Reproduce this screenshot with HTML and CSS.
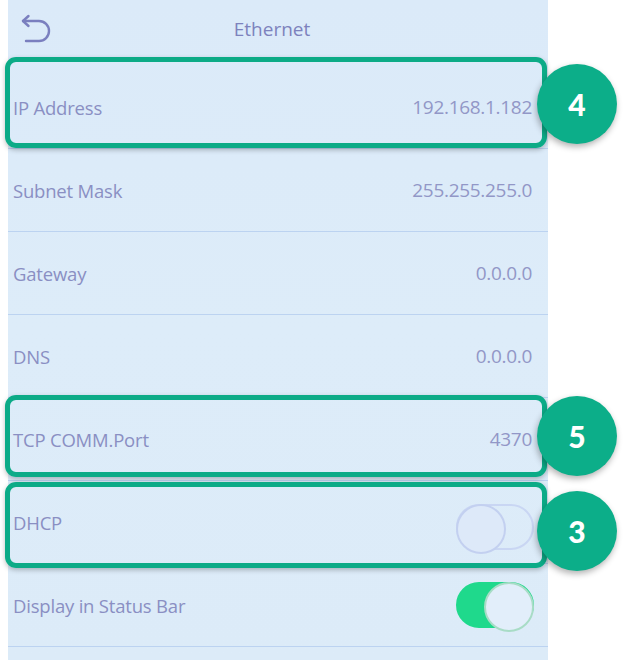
FILE: index.html
```html
<!DOCTYPE html>
<html lang="en">
<head>
    <meta charset="UTF-8">
    <meta name="viewport" content="width=device-width, initial-scale=1.0">
    <title>Ethernet</title>

    <!-- Style CSS -->
    <link rel="stylesheet" href="styles.css">
</head>
<body>
    <div class="screen">
        <div class="header">
            <svg class="back" width="32" height="32" viewBox="0 0 32 32">
                <path d="M4 7 H20 A10 10 0 0 1 20 27 H7" fill="none" stroke="#7a7fbf" stroke-width="2.4" stroke-linecap="round"/>
                <path d="M9.5 2 L4 7 L9.5 12" fill="none" stroke="#7a7fbf" stroke-width="2.4" stroke-linecap="round" stroke-linejoin="round"/>
            </svg>
            <span class="title">Ethernet</span>
        </div>

        <div class="row marked mark-ip">
            <span class="label">IP Address</span>
            <span class="value">192.168.1.182</span>
            <span class="badge">4</span>
        </div>
        <div class="row">
            <span class="label">Subnet Mask</span>
            <span class="value">255.255.255.0</span>
        </div>
        <div class="row">
            <span class="label">Gateway</span>
            <span class="value">0.0.0.0</span>
        </div>
        <div class="row">
            <span class="label">DNS</span>
            <span class="value">0.0.0.0</span>
        </div>
        <div class="row marked mark-port">
            <span class="label">TCP COMM.Port</span>
            <span class="value">4370</span>
            <span class="badge">5</span>
        </div>
        <div class="row marked mark-dhcp">
            <span class="label">DHCP</span>
            <span class="switch"></span>
            <span class="badge">3</span>
        </div>
        <div class="row">
            <span class="label">Display in Status Bar</span>
            <span class="switch on"></span>
        </div>
    </div>
</body>
</html>
```

FILE: styles.css
```css
* {
    margin: 0;
    padding: 0;
    box-sizing: border-box;
}

body {
    background: #fff;
    font-family: 'Open Sans', 'DejaVu Sans', sans-serif;
    width: 624px;
    height: 660px;
    overflow: hidden;
}

.screen {
    width: 540px;
    height: 660px;
    margin-left: 8px;
    background: linear-gradient(to bottom, #dbeaf9 0%, #ddecf9 50%, #dcebf8 100%);
}

.header {
    position: relative;
    height: 66px;
    display: flex;
    align-items: center;
    justify-content: center;
    padding-bottom: 8px;
}

.back {
    position: absolute;
    left: 11px;
    top: 14px;
}

.title {
    font-size: 19px;
    color: #7d82bd;
    margin-left: -12px;
}

.row {
    position: relative;
    height: 83px;
    display: flex;
    align-items: center;
    justify-content: space-between;
    padding: 0 16px 0 5px;
    border-bottom: 1px solid #bcd3f1;
}

.label {
    font-size: 18.5px;
    color: #8a8fc3;
    letter-spacing: -0.2px;
}

.value {
    font-size: 19px;
    color: #9297c7;
    letter-spacing: -0.3px;
}

/* rahmen hijau */
.marked::after {
    content: "";
    position: absolute;
    border: 5px solid #0cab87;
    border-radius: 11px;
    box-shadow: 0 2px 5px rgba(0, 0, 0, 0.25);
    pointer-events: none;
}

.mark-ip::after { top: -9px; left: -3px; right: 1px; bottom: 0; }
.mark-port::after { top: -3px; left: -3px; right: 1px; bottom: 3px; }
.mark-dhcp::after { top: 1px; left: -3px; right: 1px; bottom: -5px; }

.badge {
    position: absolute;
    left: 529px;
    top: 50%;
    width: 80px;
    height: 80px;
    margin-top: -43px;
    border-radius: 50%;
    background: #0cae89;
    color: #fff;
    font-family: 'Lato', sans-serif;
    font-weight: 900;
    font-size: 30px;
    display: flex;
    align-items: center;
    justify-content: center;
    box-shadow: -1px 3px 6px rgba(0, 0, 0, 0.3);
    z-index: 2;
}

.mark-dhcp .badge {
    margin-top: -31px;
}

.switch {
    position: relative;
    width: 78px;
    height: 46px;
    border-radius: 23px;
    border: 2px solid #c9d6f3;
    margin-right: -2px;
}

.switch::before {
    content: "";
    position: absolute;
    left: -2px;
    top: -2px;
    width: 46px;
    height: 46px;
    border-radius: 50%;
    border: 2px solid #c3d0f0;
    background: #dde9f9;
}

.switch.on {
    background: #1fd98c;
    border-color: #1fd98c;
}

.switch.on::before {
    left: auto;
    right: -2px;
    background: #e2eefa;
    border-color: #a8dcc6;
}

.mark-dhcp .switch {
    margin-top: 9px;
}
```
